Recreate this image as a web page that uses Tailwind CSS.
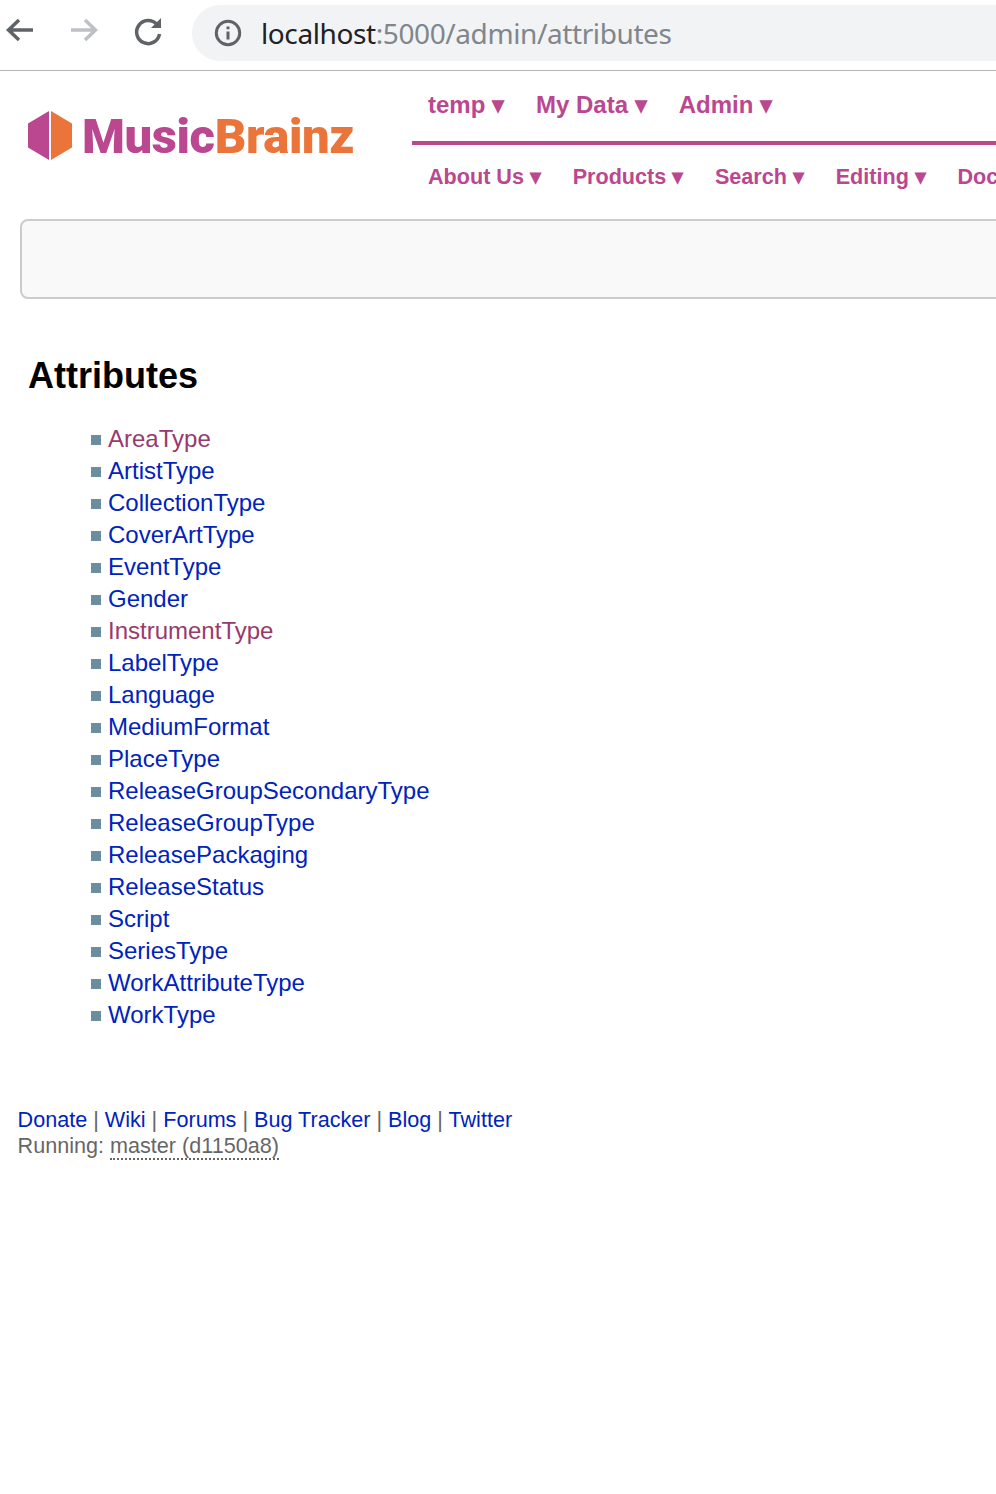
<!DOCTYPE html>
<html lang="en">
<head>
    <meta charset="UTF-8">
    <meta name="viewport" content="width=device-width, initial-scale=1.0">
    <title>MusicBrainz - Attributes</title>
    <script src="https://cdn.jsdelivr.net/npm/@tailwindcss/browser@4"></script>
</head>
<body class="bg-white w-[996px] h-[1494px] overflow-hidden font-['Liberation_Sans',sans-serif]">
    <!-- Browser toolbar -->
    <div class="h-[71px] border-b border-[#b5b5b5] flex items-start">
        <div class="w-[192px] h-[70px] shrink-0 flex items-center pl-[4px] pb-[8px]">
            <svg class="w-[32px] h-[32px]" viewBox="0 0 32 32" fill="none" stroke="#5f6368" stroke-width="3.500">
                <path d="M29 15H5M15 5L4.500 15L15 25"/>
            </svg>
            <svg class="w-[32px] h-[32px] ml-[32px]" viewBox="0 0 32 32" fill="none" stroke="#bdc1c6" stroke-width="3.500">
                <path d="M3 15H27M17 5L27.500 15L17 25"/>
            </svg>
            <svg class="w-[32px] h-[32px] ml-[33px]" viewBox="0 0 32 32" fill="none">
                <path d="M23.800 9.500A11.500 11.500 0 1 0 26.500 19" stroke="#5f6368" stroke-width="3.500"/>
                <path d="M28 3V13H18Z" fill="#5f6368"/>
            </svg>
        </div>
        <div class="mt-[5px] h-[56px] w-[900px] shrink-0 rounded-l-[28px] bg-[#f1f3f4] flex items-center pl-[22px]">
            <svg class="w-[28px] h-[28px] shrink-0" viewBox="0 0 28 28" fill="none">
                <circle cx="14" cy="14" r="11.700" stroke="#5f6368" stroke-width="3"/>
                <path d="M12.500 12.500H15.500V20.500H12.500ZM12.500 7.500H15.500V10.300H12.500Z" fill="#5f6368"/>
            </svg>
            <div class="ml-[19px] text-[28px] leading-[56px] text-[#80868b] font-['Noto_Sans',sans-serif] tracking-[-0.4px]"><span class="text-[#202124]">localhost</span>:5000/admin/attributes</div>
        </div>
    </div>

    <!-- Site header -->
    <div class="flex h-[148px]">
        <div class="w-[412px] shrink-0 flex items-start pl-[28px] pt-[40px]">
            <svg class="w-[44px] h-[49px] shrink-0" viewBox="0 0 44 49">
                <path d="M21 0V49L0 36.500V12.500Z" fill="#ba478f"/>
                <path d="M23 0L44 12.500V36.500L23 49Z" fill="#eb743b"/>
            </svg>
            <div class="ml-[10px] text-[49px] leading-[52px] font-black tracking-[-0.4px] font-['Roboto',sans-serif] text-[#ba478f]">Music<span class="text-[#eb743b]">Brainz</span></div>
        </div>
        <div class="w-[584px] shrink-0 overflow-hidden font-bold text-[#ba478f]">
            <div class="h-[74px] border-b-4 border-[#ba478f] flex gap-[32px] pl-[16px] pt-[18px] text-[24px] leading-[32px] whitespace-nowrap">
                <span>temp ▾</span>
                <span>My Data ▾</span>
                <span>Admin ▾</span>
            </div>
            <div class="flex gap-[31.7px] pl-[16px] pt-[18px] text-[21.6px] leading-[28px] whitespace-nowrap">
                <span>About Us ▾</span>
                <span>Products ▾</span>
                <span>Search ▾</span>
                <span>Editing ▾</span>
                <span>Documentation ▾</span>
            </div>
        </div>
    </div>

    <!-- Empty search panel -->
    <div class="ml-[20px] w-[1000px] h-[80px] border-2 border-[#cccccc] rounded-[8px] bg-[#f9f9f9]"></div>

    <!-- Content -->
    <h1 class="mt-[55px] ml-[28px] text-[36px] leading-[44px] font-bold text-black">Attributes</h1>
    <ul class="mt-[25px] ml-[91px] text-[24px] leading-[32px] text-[#0023bb]">
        <li class="flex items-center gap-[7px]"><span class="w-[10px] h-[10px] mt-[2px] bg-[#6a8e9e]"></span><a href="#" class="text-[#973a6e]">AreaType</a></li>
        <li class="flex items-center gap-[7px]"><span class="w-[10px] h-[10px] mt-[2px] bg-[#6a8e9e]"></span><a href="#">ArtistType</a></li>
        <li class="flex items-center gap-[7px]"><span class="w-[10px] h-[10px] mt-[2px] bg-[#6a8e9e]"></span><a href="#">CollectionType</a></li>
        <li class="flex items-center gap-[7px]"><span class="w-[10px] h-[10px] mt-[2px] bg-[#6a8e9e]"></span><a href="#">CoverArtType</a></li>
        <li class="flex items-center gap-[7px]"><span class="w-[10px] h-[10px] mt-[2px] bg-[#6a8e9e]"></span><a href="#">EventType</a></li>
        <li class="flex items-center gap-[7px]"><span class="w-[10px] h-[10px] mt-[2px] bg-[#6a8e9e]"></span><a href="#">Gender</a></li>
        <li class="flex items-center gap-[7px]"><span class="w-[10px] h-[10px] mt-[2px] bg-[#6a8e9e]"></span><a href="#" class="text-[#973a6e]">InstrumentType</a></li>
        <li class="flex items-center gap-[7px]"><span class="w-[10px] h-[10px] mt-[2px] bg-[#6a8e9e]"></span><a href="#">LabelType</a></li>
        <li class="flex items-center gap-[7px]"><span class="w-[10px] h-[10px] mt-[2px] bg-[#6a8e9e]"></span><a href="#">Language</a></li>
        <li class="flex items-center gap-[7px]"><span class="w-[10px] h-[10px] mt-[2px] bg-[#6a8e9e]"></span><a href="#">MediumFormat</a></li>
        <li class="flex items-center gap-[7px]"><span class="w-[10px] h-[10px] mt-[2px] bg-[#6a8e9e]"></span><a href="#">PlaceType</a></li>
        <li class="flex items-center gap-[7px]"><span class="w-[10px] h-[10px] mt-[2px] bg-[#6a8e9e]"></span><a href="#">ReleaseGroupSecondaryType</a></li>
        <li class="flex items-center gap-[7px]"><span class="w-[10px] h-[10px] mt-[2px] bg-[#6a8e9e]"></span><a href="#">ReleaseGroupType</a></li>
        <li class="flex items-center gap-[7px]"><span class="w-[10px] h-[10px] mt-[2px] bg-[#6a8e9e]"></span><a href="#">ReleasePackaging</a></li>
        <li class="flex items-center gap-[7px]"><span class="w-[10px] h-[10px] mt-[2px] bg-[#6a8e9e]"></span><a href="#">ReleaseStatus</a></li>
        <li class="flex items-center gap-[7px]"><span class="w-[10px] h-[10px] mt-[2px] bg-[#6a8e9e]"></span><a href="#">Script</a></li>
        <li class="flex items-center gap-[7px]"><span class="w-[10px] h-[10px] mt-[2px] bg-[#6a8e9e]"></span><a href="#">SeriesType</a></li>
        <li class="flex items-center gap-[7px]"><span class="w-[10px] h-[10px] mt-[2px] bg-[#6a8e9e]"></span><a href="#">WorkAttributeType</a></li>
        <li class="flex items-center gap-[7px]"><span class="w-[10px] h-[10px] mt-[2px] bg-[#6a8e9e]"></span><a href="#">WorkType</a></li>
    </ul>

    <!-- Footer -->
    <div class="mt-[76px] ml-[17.6px] text-[21.6px] leading-[26px] text-[#666666]">
        <div><a href="#" class="text-[#0023bb]">Donate</a> | <a href="#" class="text-[#0023bb]">Wiki</a> | <a href="#" class="text-[#0023bb]">Forums</a> | <a href="#" class="text-[#0023bb]">Bug Tracker</a> | <a href="#" class="text-[#0023bb]">Blog</a> | <a href="#" class="text-[#0023bb]">Twitter</a></div>
        <div>Running: <span class="border-b-2 border-dotted border-[#666666]">master (d1150a8)</span></div>
    </div>
</body>
</html>
